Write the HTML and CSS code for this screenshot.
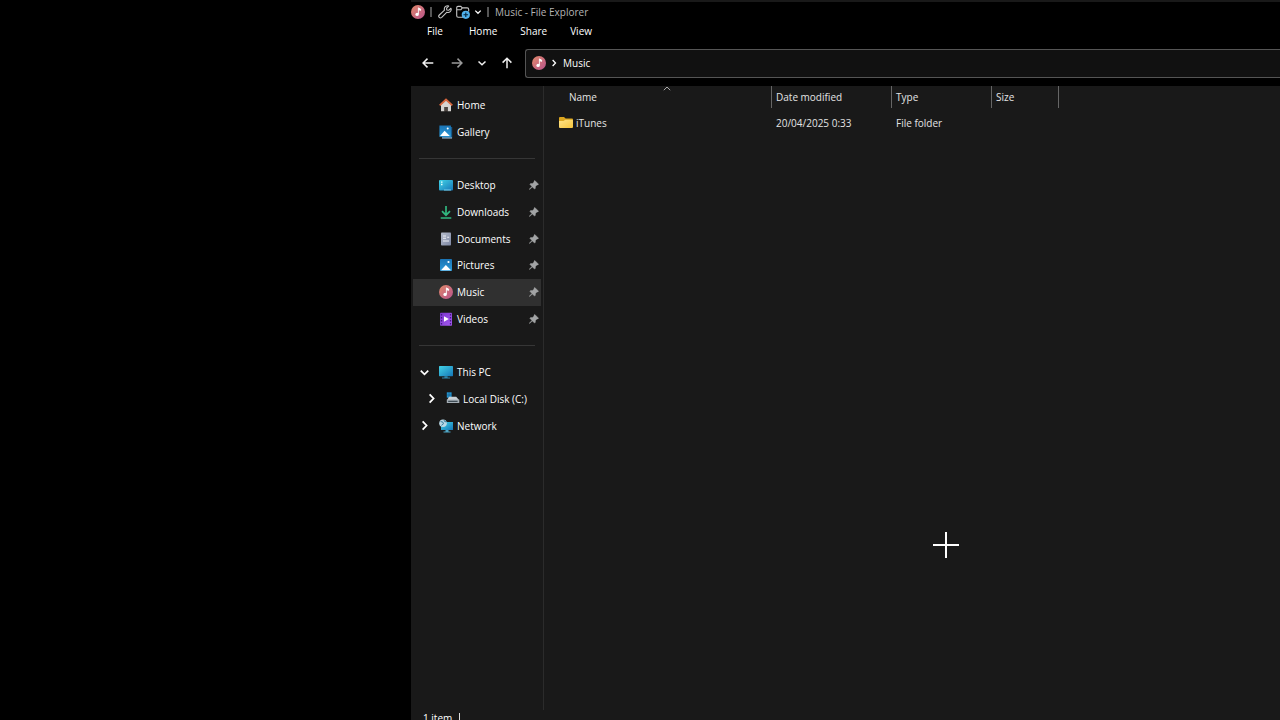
FILE: index.html
```html
<!DOCTYPE html>
<html lang="en">
<head>
<meta charset="utf-8">
<title>Music - File Explorer</title>
<link rel="stylesheet" href="styles.css">
</head>
<body>
<svg class="defs" aria-hidden="true">
  <defs>
    <linearGradient id="gMusic" x1="0" y1="0" x2="1" y2="1"><stop offset="0" stop-color="#e0896a"/><stop offset="1" stop-color="#b8528c"/></linearGradient>
    <linearGradient id="gBlue" x1="0" y1="0" x2="1" y2="1"><stop offset="0" stop-color="#43d3e6"/><stop offset="1" stop-color="#1576b8"/></linearGradient>
    <linearGradient id="gPic" x1="0" y1="0" x2="0" y2="1"><stop offset="0" stop-color="#1a73b4"/><stop offset="1" stop-color="#2c9ad8"/></linearGradient>
    <linearGradient id="gVid" x1="0" y1="0" x2="1" y2="1"><stop offset="0" stop-color="#7a35cc"/><stop offset="1" stop-color="#a65af2"/></linearGradient>
    <linearGradient id="gFold" x1="0" y1="0" x2="1" y2="1"><stop offset="0" stop-color="#ffe48a"/><stop offset="1" stop-color="#f5c43c"/></linearGradient>
    <linearGradient id="gDoc" x1="0" y1="0" x2="1" y2="1"><stop offset="0" stop-color="#b6bccb"/><stop offset="1" stop-color="#7e88a4"/></linearGradient>
  </defs>
  <symbol id="music" viewBox="0 0 14 14"><circle cx="7" cy="7" r="7" fill="url(#gMusic)"/><path d="M7.4 2.8v6.3M7.4 3l2.2 1v1.4l-2.2-.8" fill="#fff" stroke="#fff" stroke-width=".9"/><circle cx="6.1" cy="9.4" r="1.7" fill="#fff"/></symbol>
  <symbol id="pin" viewBox="0 0 10 10"><path d="M5.8.4 9.6 4.2 8.8 5 8 4.9 6.5 6.5l-.2 2-.8.6-2.2-2.2L.7 9.6l-.5-.4 2.7-2.8L.8 4.3l.7-.7 2-.2L5.1 2 5 1.1z" fill="#a2a4a5" stroke="#a2a4a5" stroke-width=".4"/></symbol>
  <symbol id="right" viewBox="0 0 10 10"><path d="m3.3 1.2 3.6 3.8-3.6 3.8" fill="none" stroke="currentColor" stroke-width="1.6"/></symbol>
  <symbol id="down" viewBox="0 0 10 10"><path d="M1.6 3.3 5 6.6l3.4-3.3" fill="none" stroke="currentColor" stroke-width="1.6"/></symbol>
</svg>

<div class="screen">
  <main class="window">
    <header class="titlebar">
      <svg class="icon" aria-hidden="true"><use href="#music"/></svg>
      <span class="bar"></span>
      <button class="tool" aria-label="Properties"><svg class="icon" viewBox="0 0 14 14"><path d="M12.9 3.2 10.7 5.3 8.8 5 8.6 3.2l2.1-2.1C8.9.3 6.4 1.4 6.3 3.8c0 .5 0 .9.2 1.3L1.3 10c-1.6 1.7.7 4 2.4 2.4l5-5.1c2.8 1 5.3-1.4 4.2-4.1z" fill="none" stroke="#c4c4c4" stroke-width="1.1" stroke-linejoin="round"/></svg></button>
      <button class="tool" aria-label="New folder"><svg class="icon" viewBox="0 0 14 14"><path d="M7 12.3H2.2Q.7 12.3.7 10.8V2.7q0-1.3 1.3-1.3h2.8l1.5 1.5h4.9q1.5 0 1.5 1.5v2M.7 4.8h4.2l1.4-1.9" fill="none" stroke="#c4c4c4" stroke-width="1.1"/><circle cx="9.8" cy="9.8" r="4.1" fill="#4fb0ea"/><path d="M9.8 7.5v4.6M7.5 9.8h4.6" stroke="#08263d" stroke-width="1.1"/></svg></button>
      <button class="tool" aria-label="Customize toolbar"><svg class="mini"><use href="#down"/></svg></button>
      <span class="bar"></span>
      <h1 class="title">Music - File Explorer</h1>
    </header>

    <nav class="menu" aria-label="Menu">
      <button>File</button><button>Home</button><button>Share</button><button>View</button>
    </nav>

    <div class="navbar">
      <div class="arrows">
        <button class="arrow" aria-label="Back"><svg viewBox="0 0 12 12"><path d="M11.3 6H1.2M5.5 1.6 1.1 6l4.4 4.4" /></svg></button>
        <button class="arrow dim" aria-label="Forward"><svg viewBox="0 0 12 12"><path d="M.7 6h10.1M6.5 1.6 10.9 6l-4.4 4.4"/></svg></button>
        <button class="arrow" aria-label="Recent locations"><svg viewBox="0 0 12 12"><path d="M2.5 4.5 6 7.8l3.5-3.3"/></svg></button>
        <button class="arrow" aria-label="Up"><svg viewBox="0 0 12 12"><path d="M6 11.3V1.2M1.6 5.6 6 1.2l4.4 4.4"/></svg></button>
      </div>
      <div class="address">
        <svg class="icon" aria-hidden="true"><use href="#music"/></svg>
        <svg class="mini" aria-hidden="true"><use href="#right"/></svg>
        <button>Music</button>
      </div>
    </div>

    <div class="body">
      <nav class="side" aria-label="Folders">
        <ul>
          <li><a href="#"><svg class="icon" viewBox="0 0 14 14"><path d="M2 6.5 7 2l5 4.5v6.8H8.6V9H5.5v4.3H2z" fill="#d6d3d0"/><path d="M5.5 9h3.1v4.3H5.5z" fill="#4d4540"/><path d="M.7 7.4 7 1.6l6.3 5.8" fill="none" stroke="#d8673e" stroke-width="1.9"/></svg>Home</a></li>
          <li><a href="#"><svg class="icon" viewBox="0 0 14 14"><path d="M3 2h10.2v11H3z" fill="#17598a"/><path d="M.4.5h11.5v11.3H.4z" fill="url(#gPic)"/><path d="m1 11 4.6-5.2 5.2 5.2z" fill="#fff"/><circle cx="8.7" cy="3.5" r="1" fill="#fff"/><path d="M3 13h10" stroke="#a7c9df"/></svg>Gallery</a></li>
          <li class="rule"></li>
          <li><a href="#"><svg class="icon" viewBox="0 0 14 14"><rect y="2" width="14" height="10.5" rx="1" fill="url(#gBlue)"/><path d="M2 4.2h1.5M2 6.5h1.5" stroke="#e4ffff" stroke-width="1.3"/><path d="M5 12h7" stroke="#84d7f1" stroke-width=".9"/></svg>Desktop<svg class="pin"><use href="#pin"/></svg></a></li>
          <li><a href="#"><svg class="icon" viewBox="0 0 14 14"><path d="M7 1v9M3 6.2l4 4 4-4M1.7 13h10.6" fill="none" stroke="#31b77f" stroke-width="1.7"/></svg>Downloads<svg class="pin"><use href="#pin"/></svg></a></li>
          <li><a href="#"><svg class="icon" viewBox="0 0 14 14"><rect x="2" y=".5" width="10" height="13" rx=".8" fill="url(#gDoc)"/><path d="M4 4h3M4 6.2h3M4 9h6M8.2 5.2h2" stroke="#eef0f6" stroke-width="1.1"/></svg>Documents<svg class="pin"><use href="#pin"/></svg></a></li>
          <li><a href="#"><svg class="icon" viewBox="0 0 14 14"><rect x="1" y="1" width="12" height="12" rx=".8" fill="url(#gPic)"/><path d="M2 12.3 6.8 7l5.2 5.3z" fill="#fff"/><circle cx="9.5" cy="4" r="1.1" fill="#fff"/></svg>Pictures<svg class="pin"><use href="#pin"/></svg></a></li>
          <li><a href="#" class="active" aria-current="page"><svg class="icon"><use href="#music"/></svg>Music<svg class="pin"><use href="#pin"/></svg></a></li>
          <li><a href="#"><svg class="icon" viewBox="0 0 14 14"><rect x="1" y=".7" width="12" height="13" rx=".8" fill="url(#gVid)"/><path d="M2.5 2v11M11.5 2v11" stroke="#431883" stroke-width="1.3" stroke-dasharray="1.5 1.5"/><path d="M5 4.2 9.8 7 5 9.8z" fill="#fff"/></svg>Videos<svg class="pin"><use href="#pin"/></svg></a></li>
          <li class="rule"></li>
          <li><a href="#" class="branch"><svg class="twist"><use href="#down"/></svg><svg class="icon" viewBox="0 0 14 14"><rect y="1" width="14" height="10.2" rx=".6" fill="url(#gBlue)"/><path d="M5.4 11.2h3.2v1.4H11v1H3v-1h2.4z" fill="#2f86ad"/></svg>This PC</a></li>
          <li><a href="#" class="branch child"><svg class="twist"><use href="#right"/></svg><svg class="icon" viewBox="0 0 14 14"><path d="M.8.3h4.8v5.4H.8z" fill="#2293cf"/><path d="M3.1.3v5.4M.8 3h4.8" stroke="#164e72" stroke-width=".5"/><path d="m2 6.5 1-1.8h7.2l2.8 3.4H1z" fill="#c9d0d5"/><path d="M.8 7.6h12.5V11H.8z" fill="#a4adb4"/><path d="M2.2 9.3h9.4" stroke="#26343e"/></svg>Local Disk (C:)</a></li>
          <li><a href="#" class="branch"><svg class="twist"><use href="#right"/></svg><svg class="icon" viewBox="0 0 14 14"><path d="M2 3h12v8H2z" fill="url(#gBlue)"/><path d="M6.5 11h3v1.5h2v1h-7v-1h2z" fill="#4fa6c5"/><circle cx="4" cy="4.3" r="3.8" fill="#b9d8e5"/><path d="M1.6 2.5 4 3.2l.4 1.7-2 1.5M5 1l.7 1.6 1.8.2" fill="none" stroke="#397f9f"/></svg>Network</a></li>
        </ul>
      </nav>

      <section class="files" aria-label="Files">
        <table>
          <colgroup><col class="c-name"><col class="c-date"><col class="c-type"><col class="c-size"><col></colgroup>
          <thead>
            <tr><th class="sorted" aria-sort="ascending">Name<svg class="caret" viewBox="0 0 8 5"><path d="M.8 4.2 4 1l3.2 3.2"/></svg></th><th>Date modified</th><th>Type</th><th>Size</th><td></td></tr>
          </thead>
          <tbody>
            <tr><td><a href="#"><svg class="icon" viewBox="0 0 14 14"><path d="M0 1.9q0-1 1-1h4l1.6 1.7H13q1 0 1 1V6H0z" fill="#dba51f"/><path d="M0 5h4.5l1.8-1.3H13q1 0 1 1V11q0 1-1 1H1q-1 0-1-1z" fill="url(#gFold)"/></svg>iTunes</a></td><td>20/04/2025 0:33</td><td>File folder</td><td></td><td></td></tr>
          </tbody>
        </table>
      </section>
    </div>

    <footer class="status">1 item<span class="tick"></span></footer>
  </main>
  <svg class="cursor" viewBox="0 0 28 28" aria-hidden="true"><path d="M14 1v26M1 14h26"/></svg>
</div>
</body>
</html>
```
FILE: styles.css
```css
* { box-sizing: border-box; }
body {
  margin: 0;
  background: #000;
  color: #fff;
  font: 10px/14px "Open Sans", "Noto Sans", sans-serif;
  overflow: hidden;
}
button { margin: 0; padding: 0; border: 0; background: none; color: inherit; font: inherit; }
a { color: inherit; text-decoration: none; }
svg { display: block; flex: none; }
.defs { position: absolute; width: 0; height: 0; }
.icon { width: 14px; height: 14px; }
.mini { width: 8px; height: 8px; }

.screen { position: relative; display: grid; grid-template-columns: 411px 1fr; }
.window {
  grid-column: 2;
  min-width: 0;
  height: calc(100vh + 6px);
  display: flex;
  flex-direction: column;
  border-top: 2px solid #191919;
}

.titlebar { display: flex; align-items: center; height: 19px; gap: 4px; }
.bar { width: 2px; height: 10px; margin: 0 2px 0 1px; background: #555; }
.title { margin: 0; font-size: 10px; font-weight: 400; color: #b4b4b4; }

.menu { display: flex; gap: 23px; height: 19px; padding-left: 16px; }
.menu button:first-child { min-width: 19px; text-align: left; }

.navbar { display: flex; align-items: center; height: 46px; padding-left: 11px; }
.arrows { display: flex; gap: 13px; margin-right: 12px; }
.arrow { width: 12px; height: 12px; }
.arrow:first-child { margin-right: 4px; }
.arrow svg { width: 12px; height: 12px; fill: none; stroke: #f0f0f0; stroke-width: 1.5; }
.dim svg { stroke: #999; }
.address {
  flex: 1;
  display: flex;
  align-items: center;
  gap: 4px;
  height: 29px;
  padding-left: 6px;
  border: 1px solid #555;
  border-right: 0;
  border-radius: 3px 0 0 3px;
  background: #111;
}
.address button { margin-left: 1px; }

.body { flex: 1; min-height: 0; display: flex; background: #191919; }
.side { width: 133px; padding: 6px 2px; border-right: 1px solid #2b2b2b; }
.side ul {
  display: grid;
  grid-template-rows: repeat(13, 1fr);
  height: 347px;
  margin: 0;
  padding: 0;
  list-style: none;
}
.side li { display: grid; min-height: 0; }
.side a { display: flex; align-items: center; gap: 4px; padding: 0 2px 0 26px; }
.side a.branch { padding-left: 6px; }
.side a.child { padding-left: 13px; }
.side .active { background: #303030; }
.twist { width: 11px; height: 11px; margin-right: 5px; }
.side .child .icon { margin-right: -1px; }
.pin { width: 10px; height: 10px; margin-left: auto; }
.rule::before { content: ""; align-self: center; height: 1px; margin: 0 6px; background: #363636; }

.files { flex: 1; min-width: 0; padding-left: 15px; }
table { width: 100%; table-layout: fixed; border-collapse: separate; border-spacing: 0; }
.c-name { width: 213px; }
.c-date { width: 120px; }
.c-type { width: 100px; }
.c-size { width: 67px; }
th, td { padding: 0 0 0 4px; text-align: left; font-weight: 400; color: #e4e4e4; }
th { height: 22px; border-right: 1px solid #666; }
tbody td { height: 30px; }
.sorted { position: relative; padding-left: 10px; }
.caret { position: absolute; top: 0; left: 50%; width: 8px; height: 5px; margin-left: -2px; fill: none; stroke: #aaa; }
td:first-child { padding-left: 0; }
td a { display: flex; align-items: center; gap: 3px; }

.status { display: flex; align-items: center; gap: 7px; height: 16px; padding: 0 0 0 12px; background: #191919; }
.tick { width: 1px; height: 10px; background: #ddd; }

.cursor { position: absolute; left: 932px; top: 531px; width: 28px; height: 28px; stroke: #fff; stroke-width: 2; }
```
